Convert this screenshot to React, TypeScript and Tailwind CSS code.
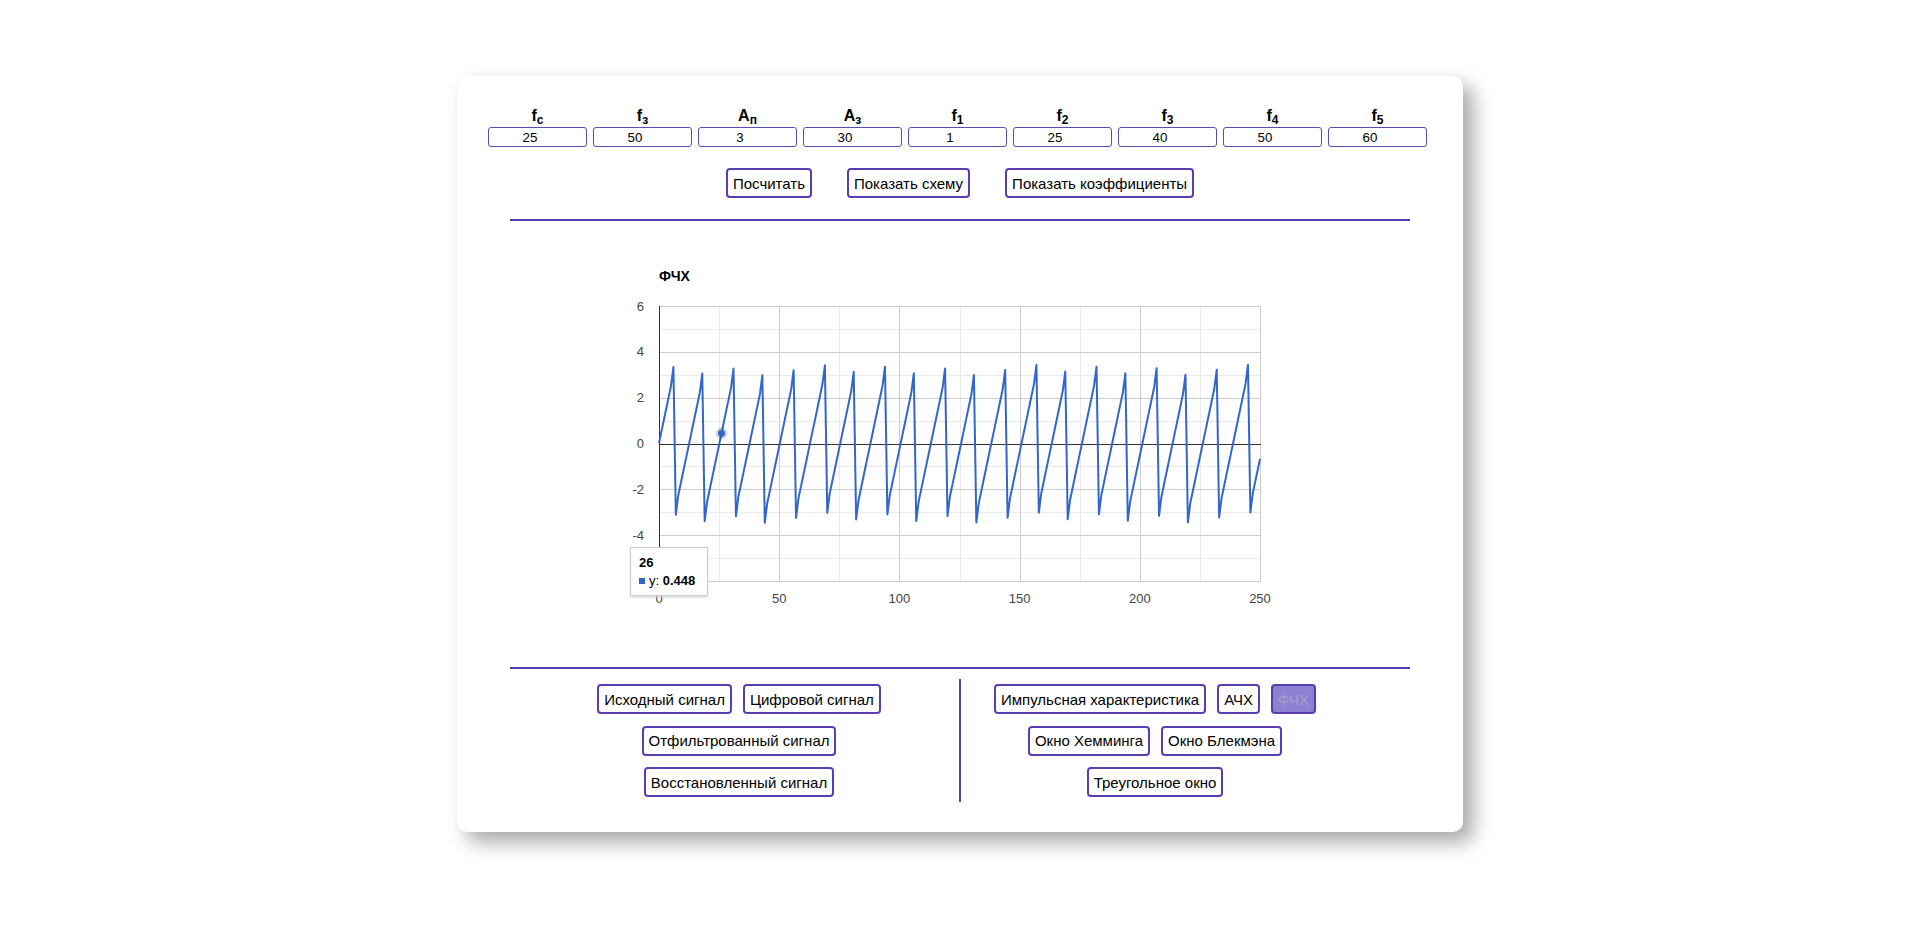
import React from "react"

const params = [
  { name: "f", sub: "с", value: "25" },
  { name: "f", sub: "з", value: "50" },
  { name: "A", sub: "п", value: "3" },
  { name: "A", sub: "з", value: "30" },
  { name: "f", sub: "1", value: "1" },
  { name: "f", sub: "2", value: "25" },
  { name: "f", sub: "3", value: "40" },
  { name: "f", sub: "4", value: "50" },
  { name: "f", sub: "5", value: "60" },
]

// plot area inside the 800x400 chart svg
const PLOT = { left: 99, top: 62, width: 601, height: 275 }
const X_MAX = 250
const Y_MIN = -6
const Y_MAX = 6

const px = (x: number) => PLOT.left + (x / X_MAX) * PLOT.width
const py = (y: number) => PLOT.top + ((Y_MAX - y) / (Y_MAX - Y_MIN)) * PLOT.height

const wrap = (x: number) => {
  const v = 0.4999 * x + 0.017
  return v - 2 * Math.PI * Math.round(v / (2 * Math.PI))
}

// phase response, wrapped to (-pi, pi]
const phase = Array.from({ length: X_MAX + 1 }, (_, x) => {
  let y = wrap(x)
  if (x < X_MAX && wrap(x + 1) < wrap(x)) y += 0.32
  if (x > 0 && wrap(x - 1) > wrap(x)) y -= 0.34
  return y
})

const linePoints = phase.map((y, x) => `${px(x).toFixed(2)},${py(y).toFixed(2)}`).join(" ")

function Btn({ children, active }: { children: React.ReactNode; active?: boolean }) {
  return (
    <button
      className={
        active
          ? "h-[30px] rounded-[4px] border-2 border-[#5a3db3] bg-[#8b80d2] px-[5px] text-[15px] leading-none text-[#a6a0c4]"
          : "h-[30px] rounded-[4px] border-2 border-[#5a3db3] bg-white px-[5px] text-[15px] leading-none text-black"
      }
    >
      {children}
    </button>
  )
}

function PhaseChart() {
  const xMajor = [0, 50, 100, 150, 200, 250]
  const xMinor = [25, 75, 125, 175, 225]
  const yMajor = [-6, -4, -2, 0, 2, 4, 6]
  const yMinor = [-5, -3, -1, 1, 3, 5]

  return (
    <div className="relative mx-auto mt-[23px] h-[400px] w-[800px]">
      <svg width="800" height="400" className="block">
        <text x="99" y="37" fontSize="14" fontWeight="bold" fill="#000">
          ФЧХ
        </text>

        {xMinor.map((v) => (
          <rect key={`xm${v}`} x={Math.round(px(v))} y={PLOT.top} width="1" height={PLOT.height} fill="#ebebeb" />
        ))}
        {yMinor.map((v) => (
          <rect key={`ym${v}`} x={PLOT.left} y={Math.round(py(v))} width={PLOT.width} height="1" fill="#ebebeb" />
        ))}
        {xMajor.map((v) => (
          <rect key={`xM${v}`} x={Math.round(px(v))} y={PLOT.top} width="1" height={PLOT.height + 1} fill="#cccccc" />
        ))}
        {yMajor.map((v) => (
          <rect key={`yM${v}`} x={PLOT.left} y={Math.round(py(v))} width={PLOT.width + 1} height="1" fill="#cccccc" />
        ))}

        {/* baselines */}
        <rect x={PLOT.left} y={Math.round(py(0))} width={PLOT.width + 1} height="1" fill="#333333" />
        <rect x={PLOT.left} y={PLOT.top} width="1" height={PLOT.height + 1} fill="#333333" />

        {yMajor.map((v) => (
          <text key={`yl${v}`} x={PLOT.left - 15} y={py(v) + 4.5} fontSize="13" textAnchor="end" fill="#444444">
            {v}
          </text>
        ))}
        {xMajor.map((v) => (
          <text key={`xl${v}`} x={px(v)} y={PLOT.top + PLOT.height + 22} fontSize="13" textAnchor="middle" fill="#444444">
            {v}
          </text>
        ))}

        <polyline points={linePoints} fill="none" stroke="#3366cc" strokeWidth="2" strokeLinejoin="round" />

        <circle cx={px(26)} cy={py(0.448)} r="6" fill="#000" fillOpacity="0.15" />
        <circle cx={px(26)} cy={py(0.448)} r="3.5" fill="#3366cc" />
      </svg>

      <div className="absolute left-[70px] top-[303px] h-[49px] w-[78px] border border-[#cccccc] bg-white pl-[8px] pt-[7px] text-[13px] leading-[15px] text-black shadow-[0_2px_2px_rgba(204,204,204,0.6)]">
        <div className="font-bold">26</div>
        <div className="mt-[3px] flex items-center">
          <span className="mr-[4px] inline-block h-[6px] w-[6px] bg-[#3366cc]" />
          <span>
            y: <span className="font-bold">0.448</span>
          </span>
        </div>
      </div>
    </div>
  )
}

export default function App() {
  return (
    <div className="min-h-[938px] bg-white pt-[76px] font-['Liberation_Sans',Arial,sans-serif]">
      <div className="mx-auto w-[1006px] rounded-[10px] bg-white pb-[30px] pt-[31px] shadow-[10px_10px_20px_rgba(0,0,0,0.35)]">
        <div className="flex gap-[6px] pl-[31px]">
          {params.map((p, i) => (
            <div key={i} className="flex w-[99px] flex-col items-center">
              <div className="text-[16px] font-bold leading-[18px] text-black">
                {p.name}
                <sub>{p.sub}</sub>
              </div>
              {/* number input: text sits left of centre, spinner space on the right */}
              <input
                readOnly
                value={p.value}
                className="mt-[2px] h-[20px] w-[99px] rounded-[3px] border border-[#5b4bb8] py-0 pl-[2px] pr-[17px] text-center text-[13.333px] leading-none text-black outline-none"
              />
            </div>
          ))}
        </div>

        <div className="mt-[21px] flex justify-center gap-[35px]">
          <Btn>Посчитать</Btn>
          <Btn>Показать схему</Btn>
          <Btn>Показать коэффициенты</Btn>
        </div>

        <div className="mx-auto mt-[21px] h-[2px] w-[900px] bg-[#5a3db3]" />

        <PhaseChart />

        <div className="mx-auto mt-[23px] h-[2px] w-[900px] bg-[#5a3db3]" />

        <div className="mx-auto mt-[10px] flex w-[900px]">
          <div className="flex w-[449px] flex-col items-center gap-[11.5px] py-[5px] pl-[9px]">
            <div className="flex gap-[11px]">
              <Btn>Исходный сигнал</Btn>
              <Btn>Цифровой сигнал</Btn>
            </div>
            <Btn>Отфильтрованный сигнал</Btn>
            <Btn>Восстановленный сигнал</Btn>
          </div>
          <div className="w-[2px] bg-[#5a3db3]" />
          <div className="flex w-[388px] flex-col items-center gap-[11.5px] py-[5px]">
            <div className="flex gap-[11px]">
              <Btn>Импульсная характеристика</Btn>
              <Btn>АЧХ</Btn>
              <Btn active>ФЧХ</Btn>
            </div>
            <div className="flex gap-[11px]">
              <Btn>Окно Хемминга</Btn>
              <Btn>Окно Блекмэна</Btn>
            </div>
            <Btn>Треугольное окно</Btn>
          </div>
        </div>
      </div>
    </div>
  )
}
